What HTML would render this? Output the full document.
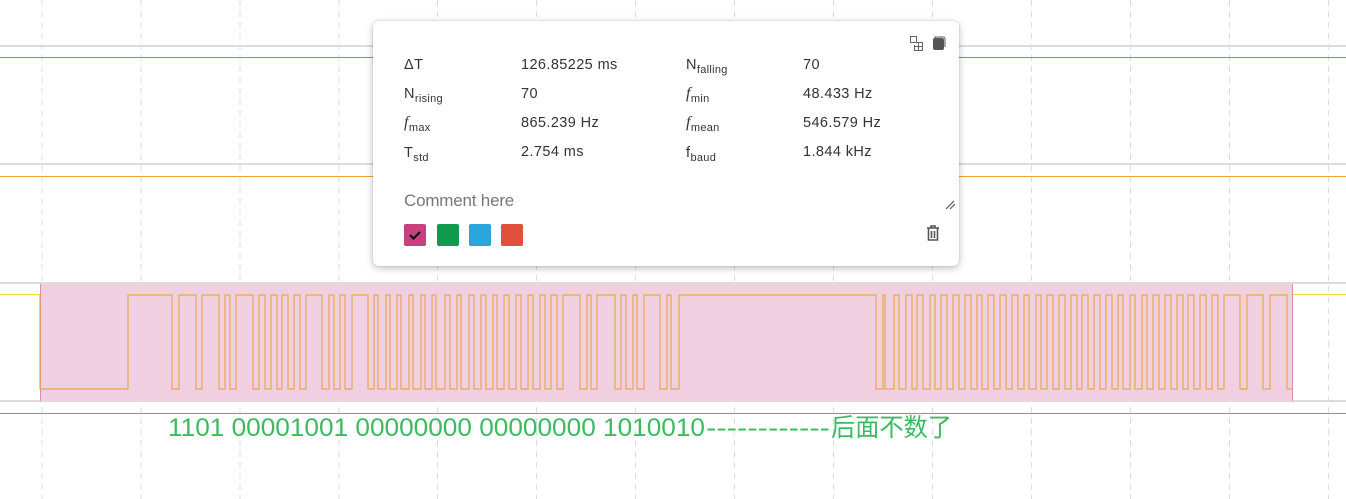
<!DOCTYPE html>
<html><head><meta charset="utf-8"><style>
html,body{margin:0;padding:0;background:#fff;width:1346px;height:499px;overflow:hidden;position:relative;font-family:"Liberation Sans",sans-serif}
.pop{position:absolute;left:373px;top:21px;width:586px;height:245px;background:#fff;border-radius:6px;box-shadow:0 2px 8px rgba(0,0,0,.25),0 0 2px rgba(0,0,0,.15)}
.c{position:absolute;font-size:14.5px;color:#333;letter-spacing:.4px;white-space:nowrap}
.c sub{font-size:11px;vertical-align:-4px;letter-spacing:.3px}
.c i{font-family:"Liberation Serif",serif;font-size:16px}
.sw{position:absolute;top:203px;width:22px;height:22px;border-radius:2px}
</style></head><body>
<svg width="1346" height="499" style="position:absolute;left:0;top:0" shape-rendering="crispEdges">
<g stroke="#ddd" stroke-width="1" stroke-dasharray="6,5">
<line x1="42" y1="0" x2="42" y2="499"/><line x1="141" y1="0" x2="141" y2="499"/><line x1="240" y1="0" x2="240" y2="499"/><line x1="339" y1="0" x2="339" y2="499"/><line x1="437.5" y1="0" x2="437.5" y2="499"/><line x1="536.5" y1="0" x2="536.5" y2="499"/><line x1="635.5" y1="0" x2="635.5" y2="499"/><line x1="734.5" y1="0" x2="734.5" y2="499"/><line x1="833.5" y1="0" x2="833.5" y2="499"/><line x1="932.5" y1="0" x2="932.5" y2="499"/><line x1="1031.5" y1="0" x2="1031.5" y2="499"/><line x1="1130.5" y1="0" x2="1130.5" y2="499"/><line x1="1229.5" y1="0" x2="1229.5" y2="499"/><line x1="1328.5" y1="0" x2="1328.5" y2="499"/>
</g>
<g stroke="#dcdcdc" stroke-width="2">
<line x1="0" y1="46" x2="1346" y2="46"/><line x1="0" y1="164" x2="1346" y2="164"/><line x1="0" y1="283" x2="1346" y2="283"/><line x1="0" y1="401" x2="1346" y2="401"/>
</g>
<line x1="0" y1="57.5" x2="1346" y2="57.5" stroke="#f06070" stroke-width="1"/>
<line x1="0" y1="176.5" x2="1346" y2="176.5" stroke="#f5a040" stroke-width="1"/>
<line x1="0" y1="294.5" x2="1346" y2="294.5" stroke="#e8e030" stroke-width="1"/>
<line x1="0" y1="413.5" x2="1346" y2="413.5" stroke="#4a9ff0" stroke-width="1"/>
<rect x="40" y="284" width="1253" height="117" fill="#f0cfe0"/>
<line x1="40.5" y1="284" x2="40.5" y2="401" stroke="#d890b0"/>
<line x1="1292.5" y1="284" x2="1292.5" y2="401" stroke="#d890b0"/>
<path fill="none" stroke="#e8a850" stroke-width="1.2" shape-rendering="auto" d="M40 295 V389 H128 V295 H172 V389 H179 V295 H196 V389 H202 V295 H219 V389 H225 V295 H230 V389 H236 V295 H253 V389 H259 V295 H265 V389 H271 V295 H277 V389 H282 V295 H288 V389 H294 V295 H300 V389 H306 V295 H322 V389 H329 V295 H334 V389 H340 V295 H345 V389 H352 V295 H368 V389 H374 V295 H378 V389 H386 V295 H390 V389 H397 V295 H401 V389 H409 V295 H413 V389 H421 V295 H425 V389 H432 V295 H436 V389 H445 V295 H450 V389 H457 V295 H461 V389 H469 V295 H474 V389 H481 V295 H486 V389 H493 V295 H497 V389 H504 V295 H509 V389 H516 V295 H521 V389 H528 V295 H533 V389 H540 V295 H545 V389 H551 V295 H557 V389 H563 V295 H580 V389 H587 V295 H591 V389 H597 V295 H615 V389 H621 V295 H626 V389 H633 V295 H637 V389 H644 V295 H660 V389 H667 V295 H671 V389 H679 V295 H876 V389 H883 V295 H885 V389 H894 V295 H899 V389 H906 V295 H912 V389 H917 V295 H923 V389 H930 V295 H935 V389 H941 V295 H947 V389 H953 V295 H959 V389 H965 V295 H971 V389 H977 V295 H982 V389 H988 V295 H994 V389 H1000 V295 H1006 V389 H1012 V295 H1018 V389 H1024 V295 H1029 V389 H1036 V295 H1041 V389 H1047 V295 H1053 V389 H1059 V295 H1065 V389 H1071 V295 H1077 V389 H1082 V295 H1088 V389 H1094 V295 H1100 V389 H1106 V295 H1112 V389 H1118 V295 H1123 V389 H1130 V295 H1135 V389 H1142 V295 H1147 V389 H1153 V295 H1159 V389 H1165 V295 H1171 V389 H1177 V295 H1183 V389 H1188 V295 H1194 V389 H1200 V295 H1206 V389 H1212 V295 H1218 V389 H1224 V295 H1240 V389 H1247 V295 H1263 V389 H1270 V295 H1287 V389 H1292"/>
<text y="436" fill="#3dba60" font-size="25" shape-rendering="auto" font-family="Liberation Sans, Noto Sans CJK SC, sans-serif"><tspan x="168" textLength="537" lengthAdjust="spacingAndGlyphs">1101 00001001 00000000 00000000 1010010</tspan><tspan x="706" textLength="124" lengthAdjust="spacingAndGlyphs">------------</tspan><tspan x="831" textLength="121" lengthAdjust="spacingAndGlyphs">后面不数了</tspan></text>
</svg>
<div class="pop">
<div class="c" style="left:31px;top:36px">ΔT</div>
<div class="c" style="left:148px;top:36px">126.85225 ms</div>
<div class="c" style="left:313px;top:36px">N<sub>falling</sub></div>
<div class="c" style="left:430px;top:36px">70</div>
<div class="c" style="left:31px;top:65px">N<sub>rising</sub></div>
<div class="c" style="left:148px;top:65px">70</div>
<div class="c" style="left:313px;top:64px"><i>f</i><sub>min</sub></div>
<div class="c" style="left:430px;top:65px">48.433 Hz</div>
<div class="c" style="left:31px;top:93px"><i>f</i><sub>max</sub></div>
<div class="c" style="left:148px;top:94px">865.239 Hz</div>
<div class="c" style="left:313px;top:93px"><i>f</i><sub>mean</sub></div>
<div class="c" style="left:430px;top:94px">546.579 Hz</div>
<div class="c" style="left:31px;top:124px">T<sub>std</sub></div>
<div class="c" style="left:148px;top:123px">2.754 ms</div>
<div class="c" style="left:313px;top:124px">f<sub>baud</sub></div>
<div class="c" style="left:430px;top:123px">1.844 kHz</div>
<div class="c" style="left:31px;top:170px;font-size:17px;color:#777;letter-spacing:-.2px">Comment here</div>
<div class="sw" style="left:31px;background:#c8407f"><svg width="22" height="22"><path d="M6 11 L9.5 14.5 L16 8" stroke="#111" stroke-width="2.2" fill="none"/></svg></div>
<div class="sw" style="left:64px;background:#109a4e"></div>
<div class="sw" style="left:96px;background:#2aa6dc"></div>
<div class="sw" style="left:128px;background:#e0503a"></div>
<svg style="position:absolute;left:536px;top:14px" width="40" height="18">
<rect x="1.5" y="1.5" width="6" height="6" fill="none" stroke="#666"/>
<path d="M5 7.5 H13.5 V15.5 H5.5 V10 M9.5 7.5 V15.5 M5.5 11.5 H13.5" fill="none" stroke="#666"/>
<path d="M24 5 a2 2 0 0 1 2-2 h7 a2 2 0 0 1 2 2 v8 a2 2 0 0 1-2 2 h-7 a2 2 0 0 1-2-2z" fill="#555"/>
<path d="M26 3 V2 h8 a2 2 0 0 1 2 2 v8" fill="none" stroke="#555" stroke-width="1"/>
</svg>
<svg style="position:absolute;left:571px;top:177px" width="14" height="14"><path d="M2 11 L10 3 M6 11 L11 6" stroke="#555" stroke-width="1.2"/></svg>
<svg style="position:absolute;left:551px;top:202px" width="18" height="20"><path d="M3 5 H15 M7 5 V3 H11 V5 M4.5 5 V17 H13.5 V5 M7.5 8 V15 M10.5 8 V15" fill="none" stroke="#555" stroke-width="1.6"/></svg>
</div>
</body></html>
